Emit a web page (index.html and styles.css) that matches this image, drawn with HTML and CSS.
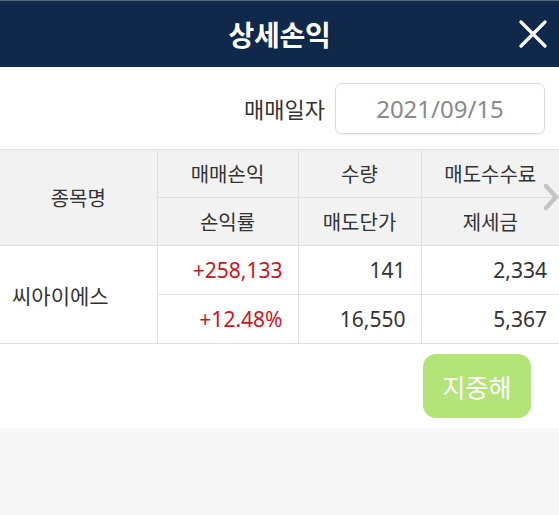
FILE: index.html
```html
<!DOCTYPE html>
<html lang="ko">
<head>
<meta charset="utf-8">
<title>상세손익</title>
<link rel="stylesheet" href="styles.css">
</head>
<body>
<div class="header">
  <span></span>
  <h1 class="title">상세손익</h1>
  <button class="close" aria-label="닫기">
    <svg width="28" height="28" viewBox="0 0 28 28"><path d="M2 2 L26 26 M26 2 L2 26" stroke="#fff" stroke-width="3.2" stroke-linecap="round" fill="none"/></svg>
  </button>
</div>
<div class="panel">
  <div class="date-row">
    <span class="date-label">매매일자</span>
    <div class="date-input">2021/09/15</div>
  </div>
  <div class="table-wrap">
    <table class="grid">
      <colgroup><col class="c1"><col class="c2"><col class="c3"><col class="c4"></colgroup>
      <thead>
        <tr><th rowspan="2" class="first">종목명</th><th>매매손익</th><th>수량</th><th class="last">매도수수료</th></tr>
        <tr><th>손익률</th><th>매도단가</th><th class="last">제세금</th></tr>
      </thead>
      <tbody>
        <tr><td rowspan="2" class="name first">씨아이에스</td><td class="up">+258,133</td><td>141</td><td class="last">2,334</td></tr>
        <tr><td class="up">+12.48%</td><td>16,550</td><td class="last">5,367</td></tr>
      </tbody>
    </table>
    <svg class="more" width="16" height="28" viewBox="0 0 16 28"><path d="M3 3 L13 14 L3 25" stroke="#c4c4c4" stroke-width="4.5" fill="none" stroke-linecap="round" stroke-linejoin="round"/></svg>
  </div>
  <div class="actions">
    <button class="stock-btn">지중해</button>
  </div>
</div>
</body>
</html>
```
FILE: styles.css
```css
* { box-sizing: border-box; }
body {
  margin: 0;
  background: #f7f7f7;
  font-family: "Noto Sans", "Noto Sans CJK KR", sans-serif;
  color: #333;
}
.header {
  height: 67px;
  border-top: 1px solid #53647c;
  background: #10284a;
  display: grid;
  grid-template-columns: 1fr auto 1fr;
  align-items: center;
}
.title {
  margin: 0;
  color: #fff;
  font-size: 28px;
  font-weight: 700;
  letter-spacing: -0.3px;
}
.close {
  justify-self: end;
  margin-right: 12px;
  padding: 0;
  border: 0;
  background: none;
  display: flex;
}
.panel { background: #fff; }
.date-row {
  height: 82px;
  display: flex;
  align-items: center;
  justify-content: flex-end;
  gap: 10px;
  padding-right: 14px;
}
.date-label { font-size: 22px; color: #333; }
.date-input {
  width: 210px;
  height: 51px;
  border: 1px solid #dadada;
  border-radius: 7px;
  box-shadow: 0 1px 2px rgba(0,0,0,0.08);
  display: flex;
  align-items: center;
  justify-content: center;
  font-size: 24px;
  color: #8a8a8a;
}
.table-wrap { position: relative; overflow: hidden; }
.grid {
  width: 100%;
  border-collapse: collapse;
  table-layout: fixed;
}
.c1 { width: 157px; }
.c2 { width: 141px; }
.c3 { width: 123px; }
.grid th, .grid td {
  border: 1px solid #e0e0e0;
  padding: 0;
  white-space: nowrap;
}
.grid th {
  background: #f2f2f2;
  font-weight: 400;
  font-size: 20px;
  height: 48px;
  text-align: center;
}
.grid td {
  height: 49px;
  font-size: 21px;
  text-align: right;
  padding-right: 15px;
}
.grid td.last { padding-right: 12px; }
.grid .first { border-left: 0; }
.grid .last { border-right: 0; }
.grid td.name {
  text-align: left;
  padding-left: 12px;
  font-size: 21px;
}
.up { color: #c8161e; }
.more {
  position: absolute;
  right: 0;
  top: 34px;
}
.actions {
  height: 84px;
  display: flex;
  align-items: center;
  justify-content: flex-end;
  padding-right: 28px;
}
.stock-btn {
  width: 108px;
  height: 64px;
  border: 0;
  border-radius: 13px;
  background: #b4e37a;
  color: #fff;
  font-family: inherit;
  font-size: 25px;
}
```
